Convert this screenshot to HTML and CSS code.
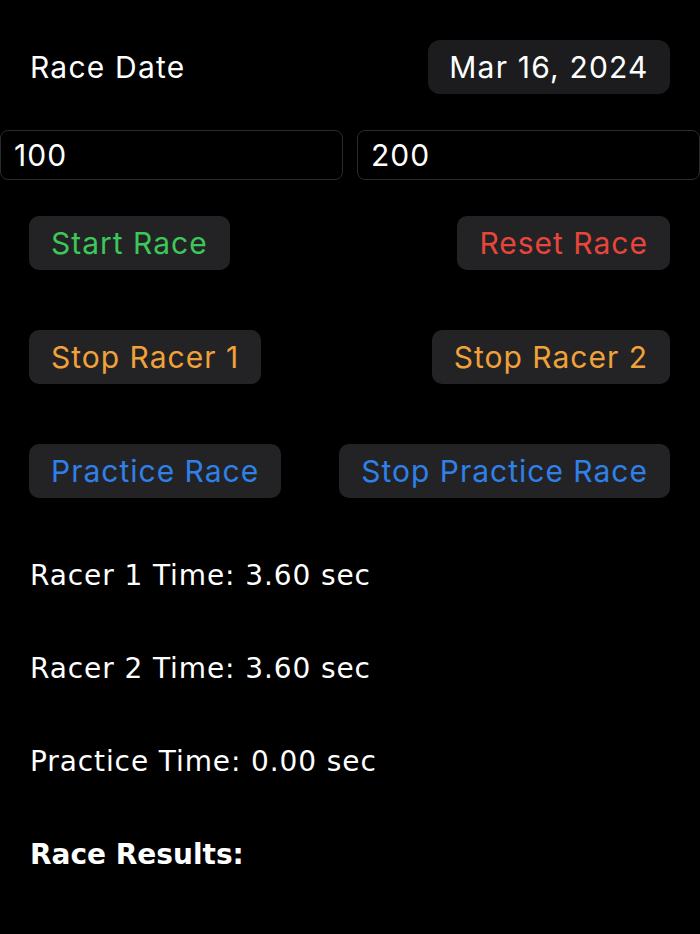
FILE: index.html
```html
<!DOCTYPE html>
<html lang="en">
<head>
  <meta charset="UTF-8">
  <link rel="stylesheet" href="styles.css">
</head>
<body>

  <div class="container">
    <div class="row date-row">
      <span class="label">Race Date</span>
      <span class="date-pill">Mar 16, 2024</span>
    </div>

    <div class="inputs">
      <input type="text" value="100">
      <input type="text" value="200">
    </div>

    <div class="row btn-row">
      <button class="btn green">Start Race</button>
      <button class="btn red">Reset Race</button>
    </div>

    <div class="row btn-row">
      <button class="btn orange">Stop Racer 1</button>
      <button class="btn orange">Stop Racer 2</button>
    </div>

    <div class="row btn-row">
      <button class="btn blue">Practice Race</button>
      <button class="btn blue">Stop Practice Race</button>
    </div>

    <div class="times">
      <p>Racer 1 Time: 3.60 sec</p>
      <p>Racer 2 Time: 3.60 sec</p>
      <p>Practice Time: 0.00 sec</p>
      <p class="results-title">Race Results:</p>
    </div>
  </div>

</body>
</html>
```

FILE: styles.css
```css
body {
  font-family: Inter, 'Noto Sans', sans-serif;
  background-color: #000;
  color: #fff;
  margin: 0;
  padding: 0;
}

.container {
  padding-top: 40px;
}

.row {
  display: flex;
  justify-content: space-between;
  align-items: center;
  padding: 0 30px 0 29px;
}

.date-row {
  padding-left: 30px;
}

.label {
  font-size: 30px;
  letter-spacing: 1.2px;
}

.date-pill {
  background: #1c1c1e;
  border-radius: 12px;
  height: 54px;
  width: 242px;
  display: flex;
  align-items: center;
  justify-content: center;
  font-size: 30px;
  letter-spacing: 1.2px;
}

.inputs {
  display: flex;
  gap: 14px;
  margin-top: 36px;
}

.inputs input {
  flex: 1;
  min-width: 0;
  height: 50px;
  box-sizing: border-box;
  background: #000;
  color: #fff;
  border: 1px solid #2b2b2d;
  border-radius: 8px;
  padding: 0 13px;
  font-family: Inter, 'Noto Sans', sans-serif;
  font-size: 30px;
  letter-spacing: 1px;
}

.btn-row {
  margin-top: 36px;
}

.btn-row + .btn-row {
  margin-top: 60px;
}

.btn {
  background: #232325;
  border: none;
  border-radius: 10px;
  height: 54px;
  padding: 0 22px;
  font-family: Inter, 'Noto Sans', sans-serif;
  font-size: 30px;
  letter-spacing: 1px;
  cursor: pointer;
}

.green { color: #3dc75a; }
.red { color: #e8453c; }
.orange { color: #f0a13a; }
.blue { color: #2f80e8; }

.times {
  padding: 0 30px;
  margin-top: 63px;
}

.times p {
  font-family: 'DejaVu Sans', Verdana, sans-serif;
  font-size: 28px;
  letter-spacing: 0.9px;
  margin: 0 0 63px;
  line-height: 30px;
}

.times .results-title {
  font-weight: bold;
  letter-spacing: 0;
}
```
